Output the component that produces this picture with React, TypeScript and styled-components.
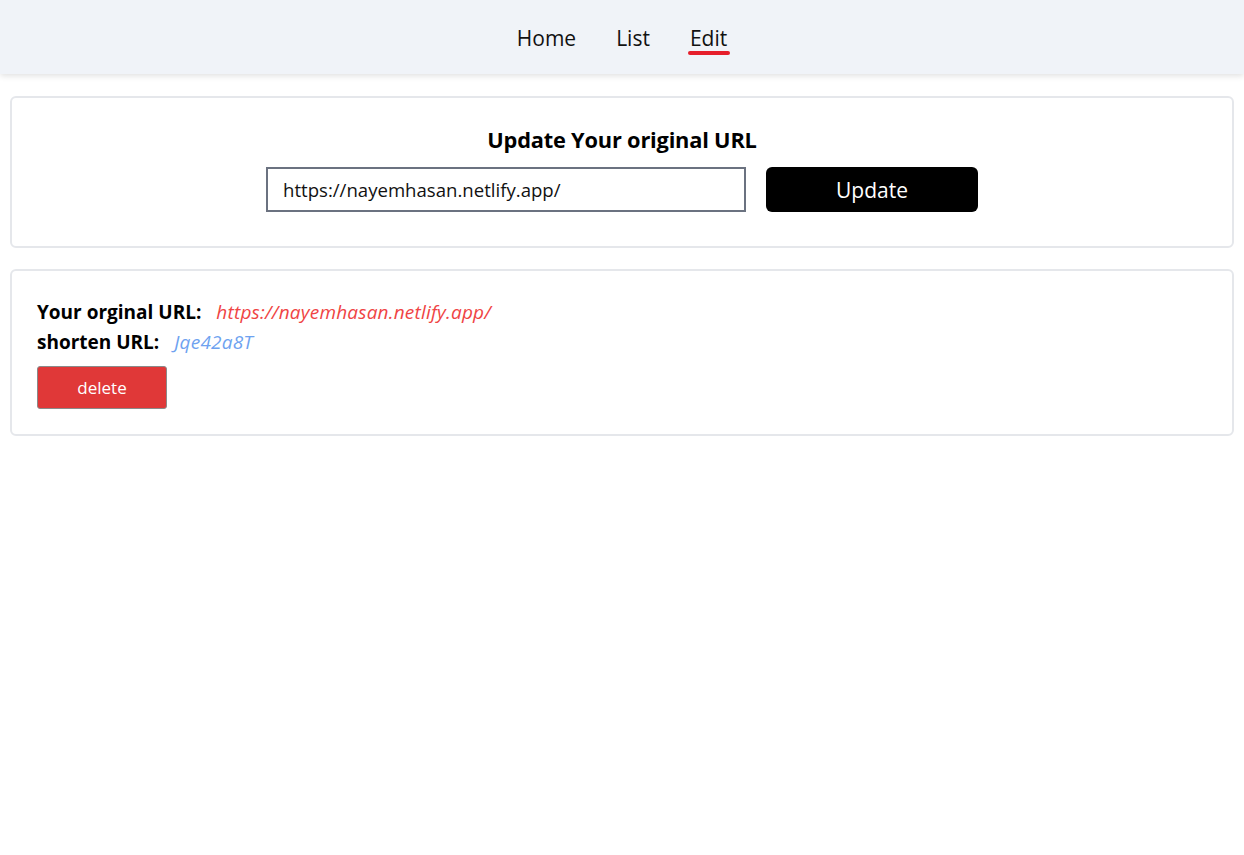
import { createGlobalStyle, styled } from "styled-components";

const GlobalStyle = createGlobalStyle`
  body {
    margin: 0;
    background: #ffffff;
    font-family: "Open Sans", "Noto Sans", sans-serif;
    color: #000;
  }
`;

const NavBar = styled.nav`
  height: 74px;
  padding-top: 2px;
  box-sizing: border-box;
  background: #f0f3f8;
  box-shadow: 0 2px 6px rgba(0, 0, 0, 0.12);
  display: flex;
  justify-content: center;
  align-items: center;
  gap: 40px;
`;

const NavLink = styled.a<{ $active?: boolean }>`
  position: relative;
  font-size: 21px;
  color: #111;
  text-decoration: none;

  &::after {
    content: "";
    display: ${p => (p.$active ? "block" : "none")};
    position: absolute;
    left: -2px;
    right: -3px;
    bottom: -3px;
    height: 4px;
    border-radius: 2px;
    background: #e61e2b;
  }
`;

const Main = styled.main`
  display: flex;
  flex-direction: column;
  gap: 21px;
  padding: 22px 10px;
`;

const Card = styled.section`
  border: 2px solid #e5e7eb;
  border-radius: 6px;
`;

const UpdateCard = styled(Card)`
  display: flex;
  flex-direction: column;
  align-items: center;
  padding: 27px 0 34px;
`;

const Title = styled.h2`
  margin: 0 0 12px;
  font-size: 21.8px;
  line-height: 30px;
  font-weight: 700;
  letter-spacing: -0.2px;
`;

const Form = styled.form`
  display: flex;
  gap: 20px;
`;

const UrlInput = styled.input`
  box-sizing: border-box;
  width: 480px;
  height: 45px;
  border: 2px solid #6b7280;
  padding: 0 15px;
  font-family: inherit;
  font-size: 18.6px;
  color: #111;
  outline: none;
`;

const UpdateButton = styled.button`
  width: 212px;
  height: 45px;
  border: none;
  border-radius: 6px;
  background: #000;
  color: #fff;
  font-family: inherit;
  font-size: 21px;
`;

const InfoCard = styled(Card)`
  display: flex;
  flex-direction: column;
  align-items: flex-start;
  padding: 26px 25px 25px;
`;

const Row = styled.div`
  display: flex;
  align-items: baseline;
  gap: 15px;
  height: 30px;
  line-height: 30px;
`;

const Label = styled.span`
  font-size: 19px;
  font-weight: 700;
`;

const Link = styled.span<{ $color: string }>`
  font-size: 19px;
  font-style: italic;
  color: ${p => p.$color};
  letter-spacing: 0.2px;
`;

const DeleteButton = styled.button`
  margin-top: 9px;
  width: 130px;
  height: 43px;
  background: #e03838;
  border: 1px solid #8a8a8a;
  border-radius: 3px;
  color: #fff;
  font-family: inherit;
  font-size: 17px;
`;

export default function App() {
  return (
    <>
      <GlobalStyle />
      <NavBar>
        <NavLink>Home</NavLink>
        <NavLink>List</NavLink>
        <NavLink $active>Edit</NavLink>
      </NavBar>
      <Main>
        <UpdateCard>
          <Title>Update Your original URL</Title>
          <Form onSubmit={e => e.preventDefault()}>
            <UrlInput defaultValue="https://nayemhasan.netlify.app/" />
            <UpdateButton type="submit">Update</UpdateButton>
          </Form>
        </UpdateCard>
        <InfoCard>
          <Row>
            <Label>Your orginal URL:</Label>
            <Link $color="#ef4444">https://nayemhasan.netlify.app/</Link>
          </Row>
          <Row>
            <Label>shorten URL:</Label>
            <Link $color="#6ea2f0">Jqe42a8T</Link>
          </Row>
          <DeleteButton>delete</DeleteButton>
        </InfoCard>
      </Main>
    </>
  );
}
